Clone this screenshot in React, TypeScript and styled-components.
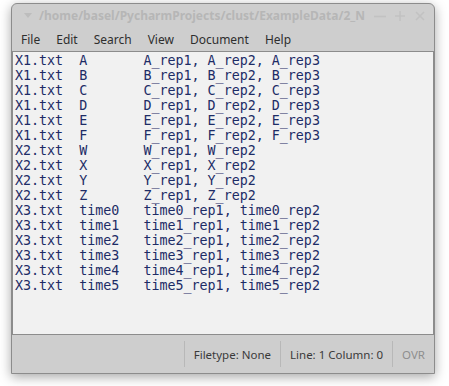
import React from 'react';
import styled, { createGlobalStyle } from 'styled-components';

const windowGray = '#cecece';
const borderGray = '#8c8c8c';
const paper = '#f1f1f1';
const ink = '#1d2c66';

const GlobalStyle = createGlobalStyle`
  html, body {
    margin: 0;
    padding: 0;
    background: #ffffff;
  }
  body {
    font-family: 'Noto Sans', 'Open Sans', sans-serif;
  }
`;

const Page = styled.div`
  width: 449px;
  height: 386px;
  padding: 3px 0 0 11px;
  box-sizing: border-box;
  overflow: hidden;
`;

const Window = styled.div`
  width: 424px;
  height: 371px;
  box-sizing: border-box;
  display: flex;
  flex-direction: column;
  background: ${windowGray};
  border: 1px solid ${borderGray};
  border-radius: 6px 6px 0 0;
  box-shadow: 0 3px 12px rgba(0, 0, 0, 0.35);
`;

const TitleBar = styled.div`
  height: 23px;
  display: flex;
  align-items: center;
  padding: 0 8px 0 12px;
  color: #b6b6b6;
  font-size: 12px;
  font-weight: bold;
`;

const Title = styled.div`
  flex: 1;
  margin-left: 7px;
  white-space: nowrap;
`;

const TitleButtons = styled.div`
  display: flex;
  gap: 8px;
  align-items: center;
`;

const MenuBar = styled.div`
  height: 24px;
  display: flex;
  align-items: center;
  padding-left: 1px;
  font-size: 12px;
  color: #2e2e2e;
`;

const MenuItem = styled.span`
  padding: 0 8px;
`;

const Editor = styled.div`
  flex: 1;
  background: ${paper};
  border: 1px solid ${borderGray};
  padding: 1px 2px;
  font-family: 'DejaVu Sans Mono', monospace;
  font-size: 13.33px;
  line-height: 15px;
  color: ${ink};
  white-space: pre;
  overflow: hidden;
  tab-size: 8;
`;

const Line = styled.div`
  height: 15px;
`;

const StatusBar = styled.div`
  height: 38px;
  display: flex;
  justify-content: flex-end;
  align-items: center;
  font-size: 11.5px;
  color: #3a3a3a;
`;

const Cell = styled.div<{ $dim?: boolean }>`
  height: 26px;
  display: flex;
  align-items: center;
  padding: 0 9px;
  border-left: 1px solid #b8b8b8;
  color: ${p => (p.$dim ? '#8e8e8e' : '#3a3a3a')};
`;

const rows = [
  'X1.txt\tA\tA_rep1, A_rep2, A_rep3',
  'X1.txt\tB\tB_rep1, B_rep2, B_rep3',
  'X1.txt\tC\tC_rep1, C_rep2, C_rep3',
  'X1.txt\tD\tD_rep1, D_rep2, D_rep3',
  'X1.txt\tE\tE_rep1, E_rep2, E_rep3',
  'X1.txt\tF\tF_rep1, F_rep2, F_rep3',
  'X2.txt\tW\tW_rep1, W_rep2',
  'X2.txt\tX\tX_rep1, X_rep2',
  'X2.txt\tY\tY_rep1, Y_rep2',
  'X2.txt\tZ\tZ_rep1, Z_rep2',
  'X3.txt\ttime0\ttime0_rep1, time0_rep2',
  'X3.txt\ttime1\ttime1_rep1, time1_rep2',
  'X3.txt\ttime2\ttime2_rep1, time2_rep2',
  'X3.txt\ttime3\ttime3_rep1, time3_rep2',
  'X3.txt\ttime4\ttime4_rep1, time4_rep2',
  'X3.txt\ttime5\ttime5_rep1, time5_rep2'
];

const menus = ['File', 'Edit', 'Search', 'View', 'Document', 'Help'];

const App = () => (
  <>
    <GlobalStyle />
    <Page>
      <Window>
        <TitleBar>
          <svg width="8" height="6" viewBox="0 0 8 6">
            <path d="M0 0 L8 0 L4 5 Z" fill="#bdbdbd" />
          </svg>
          <Title>/home/basel/PycharmProjects/clust/ExampleData/2_N</Title>
          <TitleButtons>
            <svg width="12" height="12" viewBox="0 0 12 12">
              <path d="M0 6.5 H12" stroke="#c2c2c2" strokeWidth="1.6" />
            </svg>
            <svg width="12" height="12" viewBox="0 0 12 12">
              <path d="M1 6 H11 M6 1 V11" stroke="#c2c2c2" strokeWidth="1.6" />
            </svg>
            <svg width="12" height="12" viewBox="0 0 12 12">
              <path d="M2 2 L10 10 M10 2 L2 10" stroke="#c2c2c2" strokeWidth="1.6" />
            </svg>
          </TitleButtons>
        </TitleBar>
        <MenuBar>
          {menus.map(m => (
            <MenuItem key={m}>{m}</MenuItem>
          ))}
        </MenuBar>
        <Editor>
          {rows.map(r => (
            <Line key={r}>{r}</Line>
          ))}
        </Editor>
        <StatusBar>
          <Cell>Filetype: None</Cell>
          <Cell>Line: 1 Column: 0</Cell>
          <Cell $dim>OVR</Cell>
        </StatusBar>
      </Window>
    </Page>
  </>
);

export default App;
